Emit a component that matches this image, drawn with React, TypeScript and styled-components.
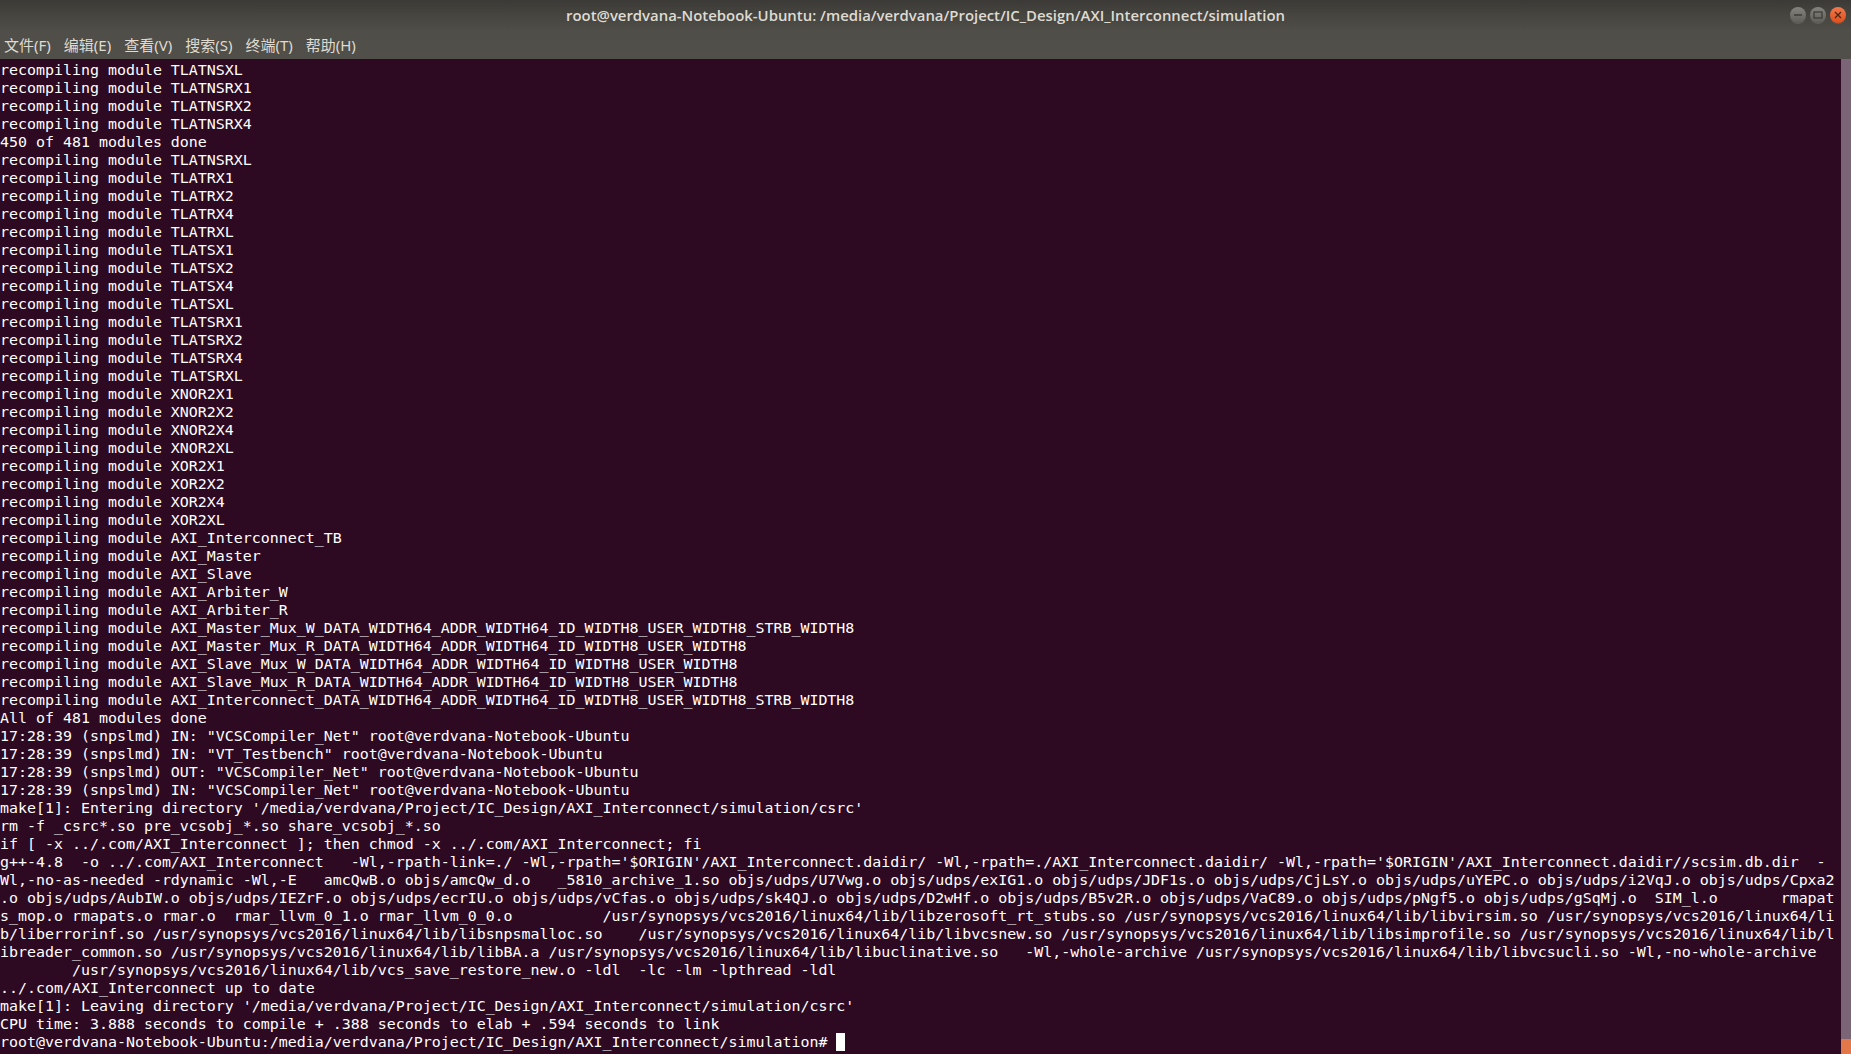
import React from "react";
import styled, { createGlobalStyle } from "styled-components";

const GlobalStyle = createGlobalStyle`
  html, body {
    margin: 0;
    padding: 0;
    height: 100%;
    overflow: hidden;
    background: #2d0922;
  }
`;

const Window = styled.div`
  display: flex;
  flex-direction: column;
  height: 100vh;
  background: #2d0922;
`;

const Header = styled.div`
  flex: none;
  height: 59px;
  background: linear-gradient(#3b3a36 0, #45443f 14px, #504e48 32px, #514f49 100%);
`;

const TitleBar = styled.div`
  display: grid;
  grid-template-columns: 1fr auto 1fr;
  align-items: center;
  height: 29px;
`;

const Title = styled.div`
  grid-column: 2;
  font-family: "Open Sans", "Liberation Sans", sans-serif;
  font-size: 14.9px;
  font-weight: 600;
  color: #dfdbd2;
  white-space: nowrap;
`;

const WindowButtons = styled.div`
  grid-column: 3;
  justify-self: end;
  display: flex;
  gap: 4px;
  margin-top: 1px;
  padding-right: 5px;
`;

const WindowButton = styled.div<{ $close?: boolean }>`
  display: flex;
  align-items: center;
  justify-content: center;
  width: 16px;
  height: 16px;
  border-radius: 50%;
  background: ${(p) =>
    p.$close
      ? "linear-gradient(#f2784a, #df4f1c)"
      : "linear-gradient(#85837d, #605e59)"};
  box-shadow: 0 1px 0 rgba(255, 255, 255, 0.12);
`;

const MenuBar = styled.div`
  display: flex;
  align-items: center;
  gap: 13px;
  height: 29px;
  margin-top: 1px;
  padding-left: 4px;
  font-family: "Noto Sans", "Noto Sans CJK SC", sans-serif;
  font-size: 15px;
  color: #dfdbd2;
`;

const Body = styled.div`
  flex: 1;
  display: flex;
  min-height: 0;
`;

const Output = styled.pre`
  flex: 1;
  margin: 0;
  padding-top: 2px;
  overflow: hidden;
  font-family: "DejaVu Sans Mono", "Liberation Mono", monospace;
  font-size: 14.95px;
  line-height: 18px;
  color: #ffffff;
`;

const Cursor = styled.span`
  display: inline-block;
  width: 9px;
  height: 18px;
  vertical-align: top;
  background: #ffffff;
`;

const Scrollbar = styled.div`
  flex: none;
  display: flex;
  flex-direction: column;
  justify-content: flex-end;
  width: 10px;
  background: #7b6476;
`;

const ScrollThumb = styled.div`
  height: 15px;
  background: #e2784a;
`;

const menus = ["文件(F)", "编辑(E)", "查看(V)", "搜索(S)", "终端(T)", "帮助(H)"];

const output = `recompiling module TLATNSXL
recompiling module TLATNSRX1
recompiling module TLATNSRX2
recompiling module TLATNSRX4
450 of 481 modules done
recompiling module TLATNSRXL
recompiling module TLATRX1
recompiling module TLATRX2
recompiling module TLATRX4
recompiling module TLATRXL
recompiling module TLATSX1
recompiling module TLATSX2
recompiling module TLATSX4
recompiling module TLATSXL
recompiling module TLATSRX1
recompiling module TLATSRX2
recompiling module TLATSRX4
recompiling module TLATSRXL
recompiling module XNOR2X1
recompiling module XNOR2X2
recompiling module XNOR2X4
recompiling module XNOR2XL
recompiling module XOR2X1
recompiling module XOR2X2
recompiling module XOR2X4
recompiling module XOR2XL
recompiling module AXI_Interconnect_TB
recompiling module AXI_Master
recompiling module AXI_Slave
recompiling module AXI_Arbiter_W
recompiling module AXI_Arbiter_R
recompiling module AXI_Master_Mux_W_DATA_WIDTH64_ADDR_WIDTH64_ID_WIDTH8_USER_WIDTH8_STRB_WIDTH8
recompiling module AXI_Master_Mux_R_DATA_WIDTH64_ADDR_WIDTH64_ID_WIDTH8_USER_WIDTH8
recompiling module AXI_Slave_Mux_W_DATA_WIDTH64_ADDR_WIDTH64_ID_WIDTH8_USER_WIDTH8
recompiling module AXI_Slave_Mux_R_DATA_WIDTH64_ADDR_WIDTH64_ID_WIDTH8_USER_WIDTH8
recompiling module AXI_Interconnect_DATA_WIDTH64_ADDR_WIDTH64_ID_WIDTH8_USER_WIDTH8_STRB_WIDTH8
All of 481 modules done
17:28:39 (snpslmd) IN: "VCSCompiler_Net" root@verdvana-Notebook-Ubuntu
17:28:39 (snpslmd) IN: "VT_Testbench" root@verdvana-Notebook-Ubuntu
17:28:39 (snpslmd) OUT: "VCSCompiler_Net" root@verdvana-Notebook-Ubuntu
17:28:39 (snpslmd) IN: "VCSCompiler_Net" root@verdvana-Notebook-Ubuntu
make[1]: Entering directory '/media/verdvana/Project/IC_Design/AXI_Interconnect/simulation/csrc'
rm -f _csrc*.so pre_vcsobj_*.so share_vcsobj_*.so
if [ -x ../.com/AXI_Interconnect ]; then chmod -x ../.com/AXI_Interconnect; fi
g++-4.8  -o ../.com/AXI_Interconnect   -Wl,-rpath-link=./ -Wl,-rpath='$ORIGIN'/AXI_Interconnect.daidir/ -Wl,-rpath=./AXI_Interconnect.daidir/ -Wl,-rpath='$ORIGIN'/AXI_Interconnect.daidir//scsim.db.dir  -
Wl,-no-as-needed -rdynamic -Wl,-E   amcQwB.o objs/amcQw_d.o   _5810_archive_1.so objs/udps/U7Vwg.o objs/udps/exIG1.o objs/udps/JDF1s.o objs/udps/CjLsY.o objs/udps/uYEPC.o objs/udps/i2VqJ.o objs/udps/Cpxa2
.o objs/udps/AubIW.o objs/udps/IEZrF.o objs/udps/ecrIU.o objs/udps/vCfas.o objs/udps/sk4QJ.o objs/udps/D2wHf.o objs/udps/B5v2R.o objs/udps/VaC89.o objs/udps/pNgf5.o objs/udps/gSqMj.o  SIM_l.o       rmapat
s_mop.o rmapats.o rmar.o  rmar_llvm_0_1.o rmar_llvm_0_0.o          /usr/synopsys/vcs2016/linux64/lib/libzerosoft_rt_stubs.so /usr/synopsys/vcs2016/linux64/lib/libvirsim.so /usr/synopsys/vcs2016/linux64/li
b/liberrorinf.so /usr/synopsys/vcs2016/linux64/lib/libsnpsmalloc.so    /usr/synopsys/vcs2016/linux64/lib/libvcsnew.so /usr/synopsys/vcs2016/linux64/lib/libsimprofile.so /usr/synopsys/vcs2016/linux64/lib/l
ibreader_common.so /usr/synopsys/vcs2016/linux64/lib/libBA.a /usr/synopsys/vcs2016/linux64/lib/libuclinative.so   -Wl,-whole-archive /usr/synopsys/vcs2016/linux64/lib/libvcsucli.so -Wl,-no-whole-archive
        /usr/synopsys/vcs2016/linux64/lib/vcs_save_restore_new.o -ldl  -lc -lm -lpthread -ldl
../.com/AXI_Interconnect up to date
make[1]: Leaving directory '/media/verdvana/Project/IC_Design/AXI_Interconnect/simulation/csrc'
CPU time: 3.888 seconds to compile + .388 seconds to elab + .594 seconds to link
root@verdvana-Notebook-Ubuntu:/media/verdvana/Project/IC_Design/AXI_Interconnect/simulation# `;

const App = () => {
  return (
    <Window>
      <GlobalStyle />
      <Header>
        <TitleBar>
          <Title>root@verdvana-Notebook-Ubuntu: /media/verdvana/Project/IC_Design/AXI_Interconnect/simulation</Title>
          <WindowButtons>
            <WindowButton>
              <svg width="10" height="10" viewBox="0 0 10 10">
                <path d="M1 5h8" stroke="#3a3935" strokeWidth="1.4" />
              </svg>
            </WindowButton>
            <WindowButton>
              <svg width="10" height="10" viewBox="0 0 10 10">
                <rect x="1" y="2" width="8" height="6" fill="none" stroke="#3a3935" strokeWidth="1.2" />
              </svg>
            </WindowButton>
            <WindowButton $close>
              <svg width="10" height="10" viewBox="0 0 10 10">
                <path d="M2 2l6 6M8 2l-6 6" stroke="#4a2a14" strokeWidth="1.4" />
              </svg>
            </WindowButton>
          </WindowButtons>
        </TitleBar>
        <MenuBar>
          {menus.map((m) => (
            <span key={m}>{m}</span>
          ))}
        </MenuBar>
      </Header>
      <Body>
        <Output>
          {output}
          <Cursor />
        </Output>
        <Scrollbar>
          <ScrollThumb />
        </Scrollbar>
      </Body>
    </Window>
  );
};

export default App;
